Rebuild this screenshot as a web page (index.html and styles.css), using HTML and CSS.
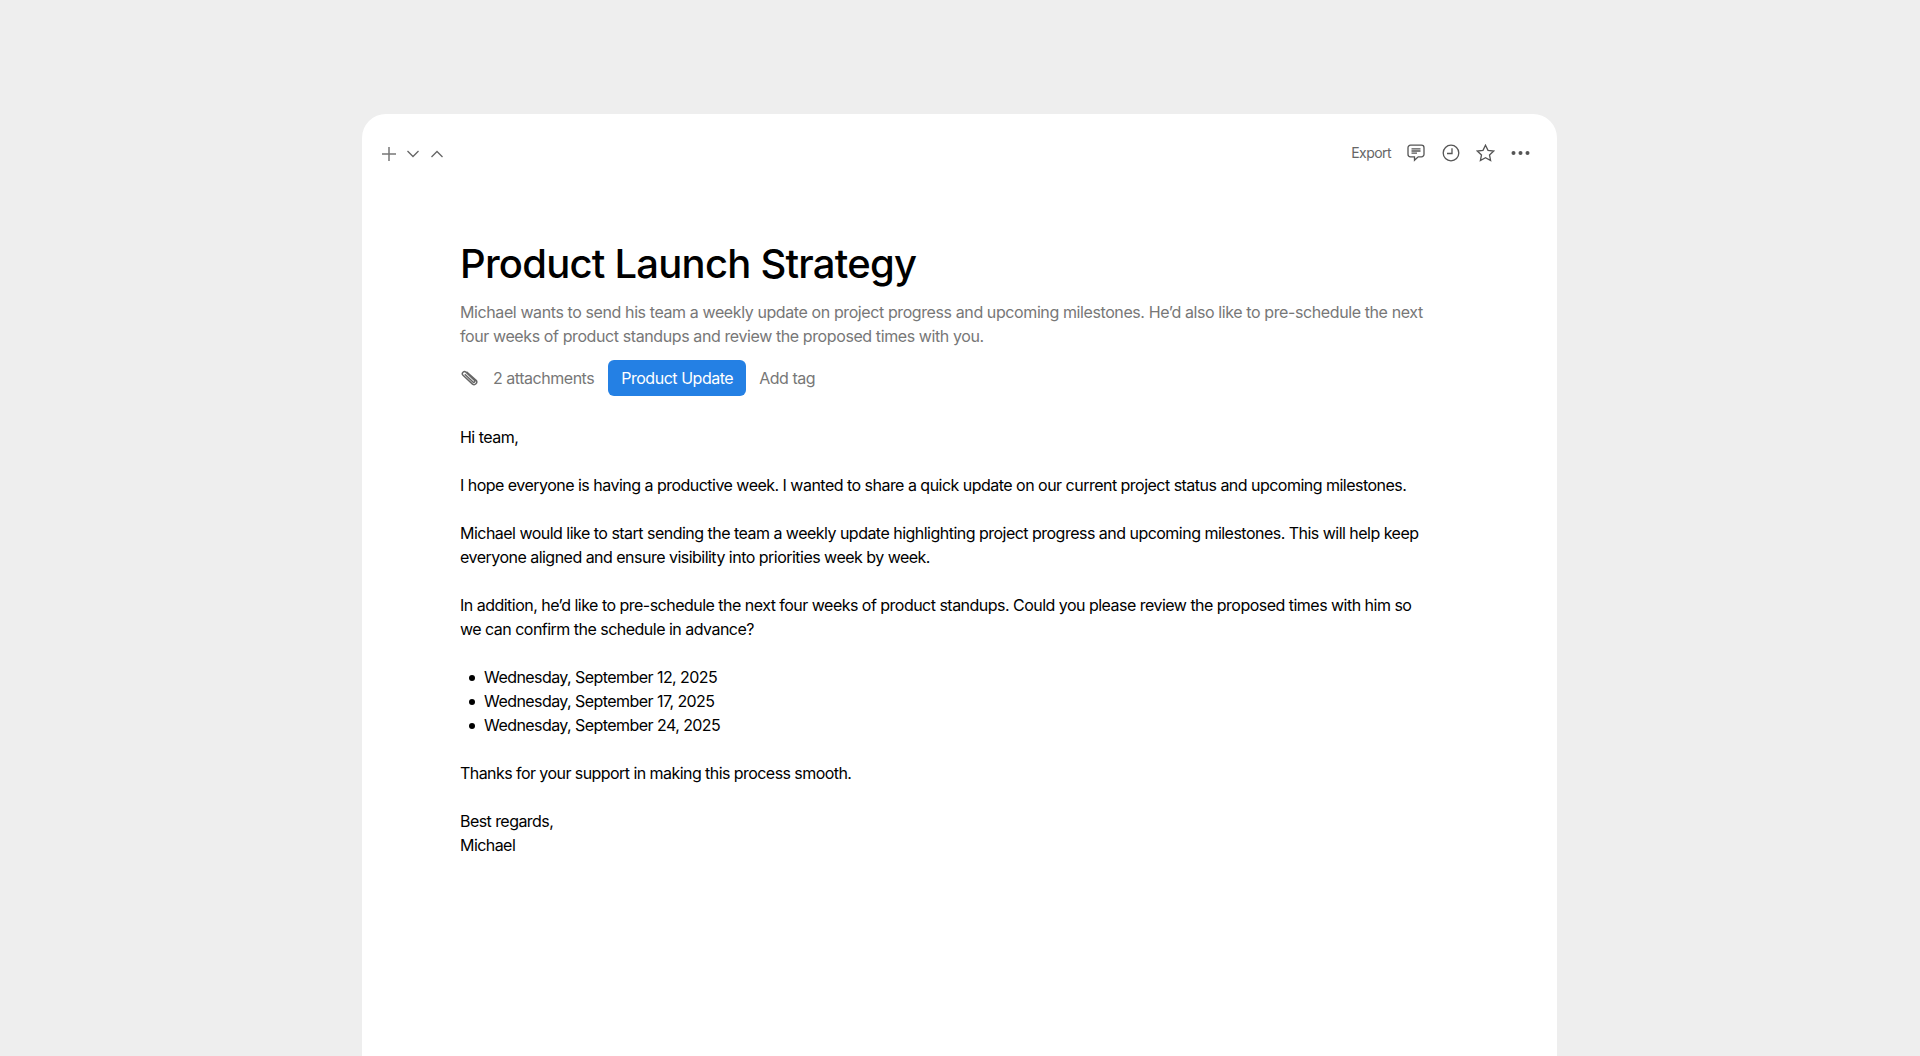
FILE: index.html
```html
<!DOCTYPE html>
<html>
<head>
    <title>Product Launch Strategy</title>
    <link rel="stylesheet" href="styles.css">
</head>
<body>
    <div class="card">
        <div class="toolbar">
            <div class="toolbar-group nav-group">
                <svg class="plus" width="14" height="14" viewBox="0 0 14 14"><path d="M7 0v14M0 7h14" stroke="#777" stroke-width="1.5" fill="none"/></svg>
                <svg width="12" height="8" viewBox="0 0 12 8"><path d="M.5 1 6 6.500 11.500 1" stroke="#666" stroke-width="1.300" fill="none"/></svg>
                <svg width="12" height="8" viewBox="0 0 12 8"><path d="M.5 7 6 1.500 11.500 7" stroke="#666" stroke-width="1.300" fill="none"/></svg>
            </div>
            <div class="toolbar-group action-group">
                <span class="export">Export</span>
                <svg class="comment" width="18" height="18" viewBox="0 0 18 18" fill="none" stroke="#555" stroke-width="1.300"><path d="M3.500 1.200h11A2.500 2.500 0 0 1 17 3.700v6.600a2.500 2.500 0 0 1-2.500 2.500h-3.300L7.500 16.300v-3.500h-4A2.500 2.500 0 0 1 1 10.300V3.700a2.500 2.500 0 0 1 2.500-2.500z"/><path d="M4.500 4.800h9M4.500 7h9M4.500 9.200h5.500"/></svg>
                <svg width="18" height="18" viewBox="0 0 18 18" fill="none" stroke="#555" stroke-width="1.300"><circle cx="9" cy="9" r="7.800"/><path d="M10 4.200v5.300H5"/></svg>
                <svg width="19" height="18" viewBox="0 0 19 18" fill="none" stroke="#555" stroke-width="1.300"><path d="m9.500 1.200 2.500 5.100 5.700.7-4.200 3.900 1.100 5.600-5.100-2.800-5.100 2.800 1.100-5.600L1.300 7 7 6.300z"/></svg>
                <svg width="19" height="6" viewBox="0 0 19 6" fill="#555"><circle cx="2.500" cy="3" r="2"/><circle cx="9.500" cy="3" r="2"/><circle cx="16.500" cy="3" r="2"/></svg>
            </div>
        </div>

        <div class="doc">
            <h1>Product Launch Strategy</h1>
            <p class="summary">Michael wants to send his team a weekly update on project progress and upcoming milestones. He’d also like to pre-schedule the next four weeks of product standups and review the proposed times with you.</p>

            <div class="meta">
                <svg class="clip" width="18" height="18" viewBox="0 0 18 18" fill="none" stroke="#666" stroke-width="1.500"><path d="M6.500 2.800 16.300 11.400a2.700 2.700 0 0 1-3.800 3.700L3 6.300a2.100 2.100 0 0 1 3-3l8.600 8.200a1.100 1.100 0 0 1-1.600 1.500L4.800 5.200"/></svg>
                <span class="attachments">2 attachments</span>
                <span class="tag">Product Update</span>
                <span class="add-tag">Add tag</span>
            </div>

            <div class="body-text">
                <p>Hi team,</p>
                <p>I hope everyone is having a productive week. I wanted to share a quick update on our current project status and upcoming milestones.</p>
                <p>Michael would like to start sending the team a weekly update highlighting project progress and upcoming milestones. This will help keep everyone aligned and ensure visibility into priorities week by week.</p>
                <p>In addition, he’d like to pre-schedule the next four weeks of product standups. Could you please review the proposed times with him so we can confirm the schedule in advance?</p>
                <ul>
                    <li>Wednesday, September 12, 2025</li>
                    <li>Wednesday, September 17, 2025</li>
                    <li>Wednesday, September 24, 2025</li>
                </ul>
                <p class="closing">Thanks for your support in making this process smooth.</p>
                <p class="closing">Best regards,<br>Michael</p>
            </div>
        </div>
    </div>
</body>
</html>
```

FILE: styles.css
```css
html, body {
    height: 100%;
}

body {
    margin: 0;
    padding: 114px 363px 0 362px;
    box-sizing: border-box;
    background-color: #eeeeee;
    font-family: Inter, "Liberation Sans", sans-serif;
    font-size: 16px;
    line-height: 24px;
    letter-spacing: -0.52px;
    color: #000;
    overflow: hidden;
}

.card {
    background: #fff;
    border-radius: 24px 24px 0 0;
    height: 942px;
}

.toolbar {
    display: flex;
    justify-content: space-between;
    align-items: center;
    padding: 27px 27px 0 20px;
    height: 24px;
}

.toolbar-group {
    display: flex;
    align-items: center;
}

.nav-group {
    gap: 12px;
    margin-top: 1px;
}

.plus {
    margin-right: -1px;
}

.action-group {
    gap: 16px;
}

.comment {
    margin-right: 1px;
}

.export {
    font-size: 14px;
    letter-spacing: -0.56px;
    color: #666;
}

.doc {
    padding: 71px 0 0 98px;
    width: 972px;
}

h1 {
    margin: 0;
    font-size: 40px;
    line-height: 56px;
    font-weight: 500;
    letter-spacing: -0.77px;
    color: #000;
}

.summary {
    margin: 8px 0 0;
    letter-spacing: -0.4px;
    color: #777;
}

.meta {
    display: flex;
    align-items: center;
    margin-top: 12px;
    letter-spacing: -0.47px;
    color: #777;
}

.clip {
    margin-right: 15px;
}

.attachments {
    margin-right: 14px;
}

.tag {
    background-color: #2480e4;
    color: #fff;
    padding: 6px 13px;
    border-radius: 6px;
    margin-right: 13px;
}

.body-text {
    margin-top: 29px;
}

.body-text p {
    margin: 0 0 24px;
}

.body-text ul {
    margin: 0 0 24px;
    padding-left: 24px;
    list-style: none;
    letter-spacing: -0.56px;
}

.body-text li {
    position: relative;
}

.body-text li::before {
    content: "";
    position: absolute;
    left: -15px;
    top: 10px;
    width: 6px;
    height: 6px;
    border-radius: 50%;
    background: #000;
}

.body-text .closing {
    letter-spacing: -0.56px;
}
```
